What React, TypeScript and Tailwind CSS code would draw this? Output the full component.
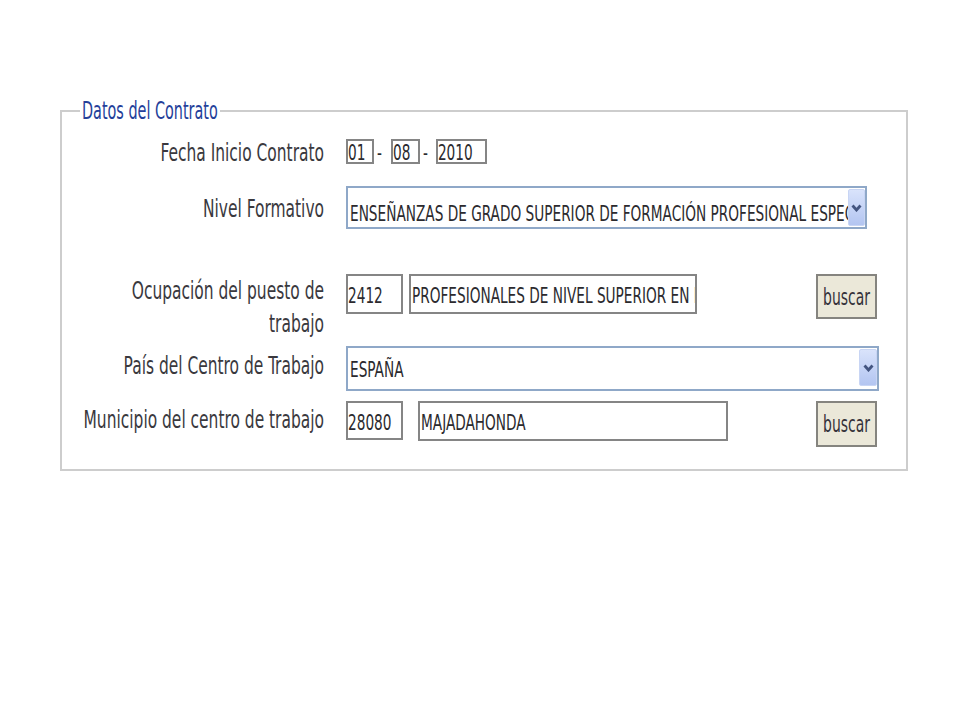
import React from 'react';

const font = "font-['DejaVu_Sans_Condensed','DejaVu_Sans',sans-serif] font-stretch-condensed";

// the screenshot is stretched vertically, so text is scaled on its Y axis
const Txt = ({ children, className = 'scale-y-[1.46]' }: { children: React.ReactNode; className?: string }) => (
  <span className={`inline-block whitespace-nowrap ${className}`}>{children}</span>
);

const Chevron = () => (
  <svg width="11" height="8" viewBox="0 0 11 8">
    <polyline points="1.5,1.5 5.5,6 9.5,1.5" fill="none" stroke="#435580" strokeWidth="2.8" />
  </svg>
);

const Arrow = ({ className }: { className: string }) => (
  <div
    className={`shrink-0 flex items-center justify-center rounded-[2px] border border-[#c8d5f4] bg-linear-to-b from-[#d9e3fb] to-[#b3c5f1] ${className}`}
  >
    <Chevron />
  </div>
);

const Buscar = ({ className }: { className: string }) => (
  <button
    className={`shrink-0 w-[61px] flex items-center justify-center border-2 border-[#85847f] bg-[#ebe8d9] text-[15.5px] leading-[20px] text-[#35323a] ${className}`}
  >
    <Txt className="scale-y-[1.5]">buscar</Txt>
  </button>
);

export default function App() {
  return (
    <div className={`min-h-[720px] w-[960px] bg-white pt-[101px] ${font}`}>
      <fieldset className="ml-[60px] w-[848px] border-2 border-[#cdcdcd] px-0 pb-[22px]">
        <legend className="ml-[18px] px-[2px] text-[16px] leading-[20px] text-[#24409a]">
          <Txt className="scale-y-[1.55]">Datos del Contrato</Txt>
        </legend>

        {/* Fecha Inicio Contrato */}
        <div className="mt-[18px] flex h-[25px]">
          <div className="w-[262px] shrink-0 pt-[3px] text-right text-[17.2px] leading-[20px] text-[#3a393e]">
            <Txt>Fecha Inicio Contrato</Txt>
          </div>
          <div className="ml-[22px] flex text-[15.2px] leading-[20px] text-[#2b2a2e]">
            <div className="w-[28px] h-[25px] border-2 border-[#858585] flex items-center pt-[3px]">
              <Txt className="scale-y-[1.4]">01</Txt>
            </div>
            <div className="ml-[3px] mr-[9px] flex items-center pt-[3px]">
              <Txt className="scale-y-[1.4]">-</Txt>
            </div>
            <div className="w-[29px] h-[25px] border-2 border-[#858585] flex items-center pt-[3px]">
              <Txt className="scale-y-[1.4]">08</Txt>
            </div>
            <div className="ml-[3px] mr-[8px] flex items-center pt-[3px]">
              <Txt className="scale-y-[1.4]">-</Txt>
            </div>
            <div className="w-[51px] h-[25px] border-2 border-[#858585] flex items-center pt-[3px]">
              <Txt className="scale-y-[1.4]">2010</Txt>
            </div>
          </div>
        </div>

        {/* Nivel Formativo */}
        <div className="mt-[22px] flex h-[43px]">
          <div className="w-[262px] shrink-0 pt-[12px] text-right text-[17.2px] leading-[20px] text-[#3a393e]">
            <Txt>Nivel Formativo</Txt>
          </div>
          <div className="ml-[22px] flex w-[521px] h-[43px] border-2 border-[#8fa8c8] bg-white text-[15.2px] leading-[20px] text-[#2b2a2e]">
            <div className="flex-1 overflow-hidden pl-[2px] flex items-center pt-[12px]">
              <Txt className="scale-y-[1.4]">ENSEÑANZAS DE GRADO SUPERIOR DE FORMACIÓN PROFESIONAL ESPECÍFICA</Txt>
            </div>
            <Arrow className="w-[17px] h-[37px] my-[1px]" />
          </div>
        </div>

        {/* Ocupación del puesto de trabajo */}
        <div className="mt-[45px] flex">
          <div className="w-[262px] shrink-0 text-right text-[17.2px] leading-[33px] text-[#3a393e]">
            <div>
              <Txt>Ocupación del puesto de</Txt>
            </div>
            <div>
              <Txt>trabajo</Txt>
            </div>
          </div>
          <div className="ml-[22px] flex items-start text-[15.2px] leading-[20px] text-[#2b2a2e]">
            <div className="w-[57px] h-[40px] border-2 border-[#858585] flex items-center pt-[4px]">
              <Txt className="scale-y-[1.4]">2412</Txt>
            </div>
            <div className="ml-[6px] w-[288px] h-[40px] overflow-hidden border-2 border-[#858585] pl-[1px] flex items-center pt-[4px]">
              <Txt className="scale-y-[1.4]">PROFESIONALES DE NIVEL SUPERIOR EN INFORMÁTICA</Txt>
            </div>
            <Buscar className="ml-[119px] h-[45px]" />
          </div>
        </div>

        {/* País del Centro de Trabajo */}
        <div className="mt-[6px] flex h-[45px]">
          <div className="w-[262px] shrink-0 pt-[9px] text-right text-[17.2px] leading-[20px] text-[#3a393e]">
            <Txt>País del Centro de Trabajo</Txt>
          </div>
          <div className="ml-[22px] flex w-[533px] h-[45px] border-2 border-[#8fa8c8] bg-white text-[15.2px] leading-[20px] text-[#2b2a2e]">
            <div className="flex-1 overflow-hidden pl-[2px] flex items-center pt-[2px]">
              <Txt className="scale-y-[1.4]">ESPAÑA</Txt>
            </div>
            <Arrow className="w-[18px] h-[37px] mt-[1px]" />
          </div>
        </div>

        {/* Municipio del centro de trabajo */}
        <div className="mt-[10px] flex h-[46px]">
          <div className="w-[262px] shrink-0 pt-[8px] text-right text-[17.2px] leading-[20px] text-[#3a393e]">
            <Txt>Municipio del centro de trabajo</Txt>
          </div>
          <div className="ml-[22px] flex items-start text-[15.2px] leading-[20px] text-[#2b2a2e]">
            <div className="w-[57px] h-[39px] border-2 border-[#858585] flex items-center pt-[4px]">
              <Txt className="scale-y-[1.4]">28080</Txt>
            </div>
            <div className="ml-[15px] w-[310px] h-[40px] overflow-hidden border-2 border-[#858585] pl-[1px] flex items-center pt-[4px]">
              <Txt className="scale-y-[1.4]">MAJADAHONDA</Txt>
            </div>
            <Buscar className="ml-[88px] h-[46px]" />
          </div>
        </div>
      </fieldset>
    </div>
  );
}
